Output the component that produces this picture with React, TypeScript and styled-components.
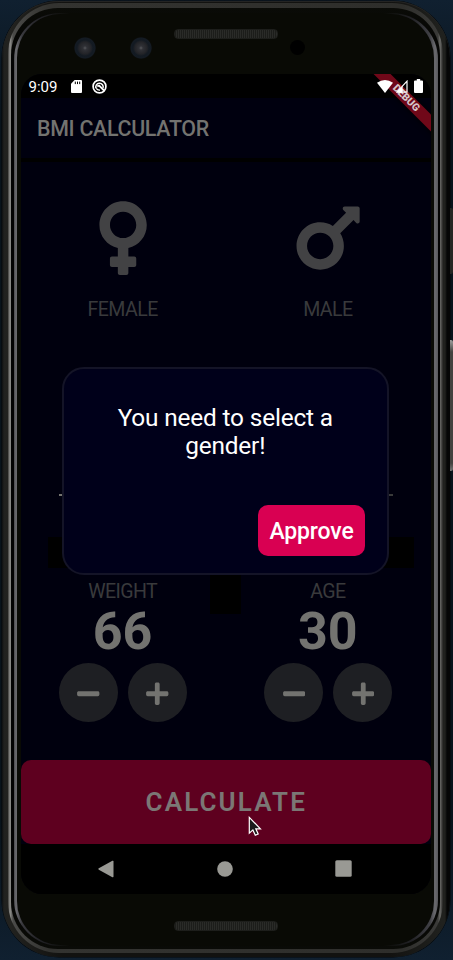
import React from 'react';
import styled, { createGlobalStyle } from 'styled-components';
import { FaMars, FaMinus, FaPlus, FaVenus } from 'react-icons/fa';

const GlobalStyle = createGlobalStyle`
  * { box-sizing: border-box; }
  html, body { margin: 0; background: #0b1723; overflow: hidden; }
`;

/* ---------- Device ---------- */

const Desktop = styled.main`
  width: 453px;
  height: 960px;
  padding: 1px 0 0 2px;
  display: flex;
  overflow: hidden;
  background: linear-gradient(180deg, #102030 0, #08131b 120px, #08131b 820px, #102030 100%);
  font-family: Roboto, 'Liberation Sans', sans-serif;
`;

const Chassis = styled.div`
  flex: none;
  width: 448px;
  height: 956px;
  padding: 2px 7.5px 4px 6px;
  border-radius: 57px;
  background: linear-gradient(90deg, #0d0f10 0, #20211f 2px, #22221f 8px, #121210 60px, #121210 388px, #20211e 440px, #20211e 443px, #050606 445px, #050606 447px);
  box-shadow: 0 0 0 0.5px #050708, inset 0 1px 0 #242423;
`;

const OuterRing = styled.div`
  height: 100%;
  padding: 5px 3px 4px 3px;
  border-radius: 51px;
  background: linear-gradient(90deg, #3c3c3a 0, #92928f 2px, #4a4a48 5px, #333330 40px, #2e2e2b 394px, #3a3a38 430px, #6c6c69 432px, #30302e 434.5px);
`;

const DarkRing = styled.div`
  height: 100%;
  padding: 5px 2px 3px 2.5px;
  border-radius: 47px;
  background: linear-gradient(#0a0b07, #020202 60px, #020202 860px, #0a0b07);
`;

const InnerRing = styled.div`
  height: 100%;
  padding: 1px 3.5px 1px 3px;
  border-radius: 46px;
  background: linear-gradient(90deg, #4a4a4d 0, #6c6c70 2px, #38383d 8px, #222226 26px, #090a05 56px, #090a05 370px, #222226 398px, #404045 416px, #6a6a6e 421px, #58585c 424px);
`;

const Face = styled.div`
  height: 100%;
  display: flex;
  flex-direction: column;
  border-radius: 44px;
  background: #090a05;
`;

const TopBezel = styled.div`
  flex: none;
  height: 60px;
  display: flex;
  align-items: flex-start;
  padding: 15px 0 0 57.5px;
`;

const Lens = styled.div<{ $gap: number }>`
  width: 22px;
  height: 22px;
  margin: 8px ${(p) => p.$gap}px 0 0;
  border-radius: 50%;
  background: radial-gradient(circle, #57585c 0, #303136 2px, #232428 6px, #131a22 8px, #141b23 10px, #0b0d0c 11px);
`;

const Speaker = styled.div`
  width: 104px;
  height: 10px;
  border-radius: 4px;
  background: repeating-linear-gradient(90deg, #1c1d1a 0 1px, #2a2b28 1px 2px);
  border: 1px solid #1d1e1b;
`;

const Sensor = styled.div`
  width: 15px;
  height: 15px;
  margin: 11px 0 0 12px;
  border-radius: 50%;
  background: #000;
`;

const BottomBezel = styled.div`
  flex: 1;
  display: flex;
  justify-content: center;
  padding: 27px 0 0 1.5px;
`;

const SideKeys = styled.div`
  flex: 1;
  height: 956px;
  display: flex;
  flex-direction: column;
  padding-top: 207px;
  gap: 66px;
`;

const SideKey = styled.div<{ $height: number; $bright?: boolean }>`
  height: ${(p) => p.$height}px;
  border-radius: 0 2px 2px 0;
  background: ${(p) => (p.$bright ? 'linear-gradient(#a0a09e, #42423f 12px, #42423f 94%, #777)' : '#252623')};
`;

/* ---------- Screen ---------- */

const Screen = styled.div`
  position: relative;
  flex: none;
  width: 410.5px;
  height: 819.5px;
  margin-left: 4px;
  display: flex;
  flex-direction: column;
  overflow: hidden;
  border-radius: 21px;
  background: #00000e;
`;

const StatusBar = styled.div`
  flex: none;
  height: 24px;
  display: flex;
  align-items: center;
  padding: 1px 8px 0 8px;
  background: #000;
  color: #fff;
`;

const Clock = styled.span`
  width: 42px;
  font-size: 15px;
  line-height: 22px;
`;

const StatusIcons = styled.div`
  position: relative;
  z-index: 2;
  display: flex;
  align-items: center;
  gap: 6px;
  margin-left: auto;
  margin-top: -1px;
  svg:first-child { margin-right: -2.5px; }
`;

const NoticeIcons = styled.div`
  display: flex;
  align-items: center;
  gap: 10px;
  margin-top: -1px;
`;

const DebugBanner = styled.div`
  position: absolute;
  z-index: 1;
  top: 18.4px;
  left: 325px;
  width: 120px;
  height: 12.3px;
  transform: rotate(45deg);
  background: #700819;
  box-shadow: 0 0 6px #000;
  color: #d5c4c9;
  text-align: center;
  font-size: 10.4px;
  font-weight: 900;
  line-height: 12.5px;
`;

const AppBar = styled.header`
  flex: none;
  height: 60px;
  padding: 0 16.5px;
  font-size: 21.4px;
  font-weight: 500;
  letter-spacing: -0.3px;
  line-height: 62px;
  color: #737370;
  white-space: nowrap;
  background: #00000f;
`;

const BarShadow = styled.div`
  flex: none;
  height: 4px;
  background: #000;
`;

const Genders = styled.section`
  flex: none;
  height: 199px;
  display: grid;
  grid-template-columns: 1fr 1fr;
`;

const Gender = styled.div`
  display: flex;
  flex-direction: column;
  align-items: center;
  padding-top: 33.5px;
  gap: 18px;
  color: #424244;
  svg { display: block; height: 84.2px; width: auto; }
`;

const Label = styled.span`
  font-size: 19.6px;
  letter-spacing: -0.6px;
  line-height: 24px;
  margin-left: -1px;
  color: #393a3c;
`;

const HeightPanel = styled.section`
  flex: none;
  height: 210px;
  padding: 133px 17px 0 27px;
`;

const Track = styled.div`
  height: 1.5px;
  margin: 0 21px 41px 11px;
  background: linear-gradient(90deg, #74746f 50%, #393a3a 50%);
`;

const PanelShadow = styled.div`
  height: 31px;
  background: #000;
`;

const Counters = styled.section`
  position: relative;
  flex: 1;
  display: grid;
  grid-template-columns: 1fr 1fr;
`;

const CounterShadow = styled.div`
  position: absolute;
  left: 189px;
  top: 0;
  width: 31.5px;
  height: 43px;
  background: #000;
`;

const Counter = styled.div`
  display: flex;
  flex-direction: column;
  align-items: center;
  padding-top: 9px;
`;

const Amount = styled.strong`
  font-size: 52px;
  font-weight: 700;
  line-height: 56px;
  margin: 0 1px 1px 0;
  color: #737370;
`;

const Steps = styled.div`
  display: flex;
  gap: 10px;
  margin-top: 2px;
`;

const StepButton = styled.button`
  width: 59px;
  height: 59px;
  padding: 2px 0 0;
  border: 0;
  border-radius: 50%;
  display: flex;
  align-items: center;
  justify-content: center;
  background: #1e1f23;
  color: #737370;
  svg { width: 22.5px; height: 25.5px; }
`;

const Calculate = styled.button`
  flex: none;
  height: 84px;
  border: 0;
  border-radius: 10px;
  padding: 0 0 1px 1px;
  background: #5e001f;
  color: #7b7775;
  font-family: inherit;
  font-size: 26px;
  font-weight: 600;
  letter-spacing: 2.1px;
`;

const NavBar = styled.nav`
  flex: none;
  height: 49.5px;
  display: flex;
  align-items: center;
  justify-content: space-between;
  padding: 0 79.5px 0 77px;
  background: #000;
  svg { display: block; }
  svg:nth-child(2) { margin-left: 2.5px; }
`;

/* ---------- Dialog ---------- */

const Dialog = styled.div`
  position: absolute;
  left: 41.5px;
  top: 293px;
  width: 326.5px;
  height: 207.5px;
  padding: 34.5px 21.5px 16.5px;
  display: flex;
  flex-direction: column;
  justify-content: space-between;
  align-items: flex-end;
  border: 2px solid #141427;
  border-radius: 22px;
  background: #00001a;
`;

const Message = styled.p`
  width: 100%;
  margin: 0;
  padding: 0 26px;
  text-align: center;
  font-size: 24.4px;
  letter-spacing: -0.17px;
  line-height: 28.6px;
  color: #fff;
`;

const Approve = styled.button`
  width: 107px;
  height: 51.5px;
  padding: 3px 0 0;
  border: 0;
  border-radius: 10px;
  background: #d90052;
  color: #fff;
  font-family: inherit;
  font-size: 23px;
  font-weight: 500;
  letter-spacing: -0.15px;
`;

const Pointer = styled.svg`
  position: absolute;
  left: 227px;
  top: 742px;
`;

const SdCard = () => (
  <svg width="11" height="13" viewBox="0 0 11 13">
    <path d="M3.6 0H10a1 1 0 0 1 1 1v11a1 1 0 0 1-1 1H1a1 1 0 0 1-1-1V3.7z" fill="#fff" />
    <path d="M4.3 1.6v2.5M6.5 1.6v2.5M8.7 1.6v2.5" stroke="#000" strokeWidth="1" />
  </svg>
);

const SyncBadge = () => (
  <svg width="15" height="15" viewBox="0 0 15 15" fill="none">
    <circle cx="7.5" cy="7.5" r="6.4" stroke="#fff" strokeWidth="1.7" />
    <path d="M4.1 9.3a3.7 3.7 0 1 1 6.9-.2" stroke="#fff" strokeWidth="1.5" />
    <path d="M5.3 7.4l1.8-.9 5 5" stroke="#fff" strokeWidth="1.8" />
    <path d="M4.2 9.3q1.4 2 3.8 1.7" stroke="#fff" strokeWidth="1.3" />
  </svg>
);

const Wifi = () => (
  <svg width="16" height="13" viewBox="0 0 16 13">
    <path d="M0 2.8Q8-2.6 16 2.8L8 13z" fill="#fff" />
  </svg>
);

const Signal = () => (
  <svg width="12" height="13" viewBox="0 0 12 13">
    <path d="M.9 12.2L11 1.2v11z" fill="none" stroke="#fff" strokeWidth="1.2" />
    <path d="M.9 12.4L6.6 6v6.4z" fill="#fff" />
  </svg>
);

const Battery = () => (
  <svg width="9" height="14" viewBox="0 0 9 14">
    <path d="M2.8 0h3.4v1.4H8a1 1 0 0 1 1 1V13a1 1 0 0 1-1 1H1a1 1 0 0 1-1-1V2.4a1 1 0 0 1 1-1h1.8z" fill="#fff" />
  </svg>
);

const CounterCard = ({ label, value }: { label: string; value: number }) => (
  <Counter>
    <Label>{label}</Label>
    <Amount>{value}</Amount>
    <Steps>
      <StepButton aria-label={`Decrease ${label}`}><FaMinus /></StepButton>
      <StepButton aria-label={`Increase ${label}`}><FaPlus /></StepButton>
    </Steps>
  </Counter>
);

const AppScreen = () => (
  <Screen>
    <StatusBar>
      <Clock>9:09</Clock>
      <NoticeIcons><SdCard /><SyncBadge /></NoticeIcons>
      <StatusIcons><Wifi /><Signal /><Battery /></StatusIcons>
    </StatusBar>
    <DebugBanner>DEBUG</DebugBanner>
    <AppBar>BMI CALCULATOR</AppBar>
    <BarShadow />
    <Genders>
      <Gender><FaVenus /><Label>FEMALE</Label></Gender>
      <Gender><FaMars /><Label>MALE</Label></Gender>
    </Genders>
    <HeightPanel>
      <Track />
      <PanelShadow />
    </HeightPanel>
    <Counters>
      <CounterShadow />
      <CounterCard label="WEIGHT" value={66} />
      <CounterCard label="AGE" value={30} />
    </Counters>
    <Calculate>CALCULATE</Calculate>
    <NavBar>
      <svg width="16" height="18" viewBox="0 0 16 18"><path d="M.8 8.3L14.4.8q1.1-.5 1.1.6v15.2q0 1.1-1.1.6L.8 9.7q-1-.7 0-1.4z" fill="#999994" /></svg>
      <svg width="16" height="16" viewBox="0 0 16 16"><circle cx="8" cy="8" r="7.8" fill="#999994" /></svg>
      <svg width="17" height="17" viewBox="0 0 17 17"><rect x=".3" y=".3" width="16.4" height="16.4" rx="1.5" fill="#999994" /></svg>
    </NavBar>
    <Dialog role="dialog">
      <Message>You need to select a gender!</Message>
      <Approve>Approve</Approve>
    </Dialog>
    <Pointer width="14" height="21" viewBox="0 0 14 21">
      <path d="M1.3 1.4v15.8l3.6-3.3 2.4 5.4 2.9-1.3-2.4-5.2h4.6z" fill="#1b1b1b" stroke="#fff" strokeWidth="1.2" />
    </Pointer>
  </Screen>
);

export default function App() {
  return (
    <>
      <GlobalStyle />
      <Desktop>
        <Chassis>
          <OuterRing>
            <DarkRing>
              <InnerRing>
                <Face>
                  <TopBezel>
                    <Lens $gap={34} />
                    <Lens $gap={22} />
                    <Speaker />
                    <Sensor />
                  </TopBezel>
                  <AppScreen />
                  <BottomBezel><Speaker /></BottomBezel>
                </Face>
              </InnerRing>
            </DarkRing>
          </OuterRing>
        </Chassis>
        <SideKeys>
          <SideKey $height={66} />
          <SideKey $height={131} $bright />
        </SideKeys>
      </Desktop>
    </>
  );
}
